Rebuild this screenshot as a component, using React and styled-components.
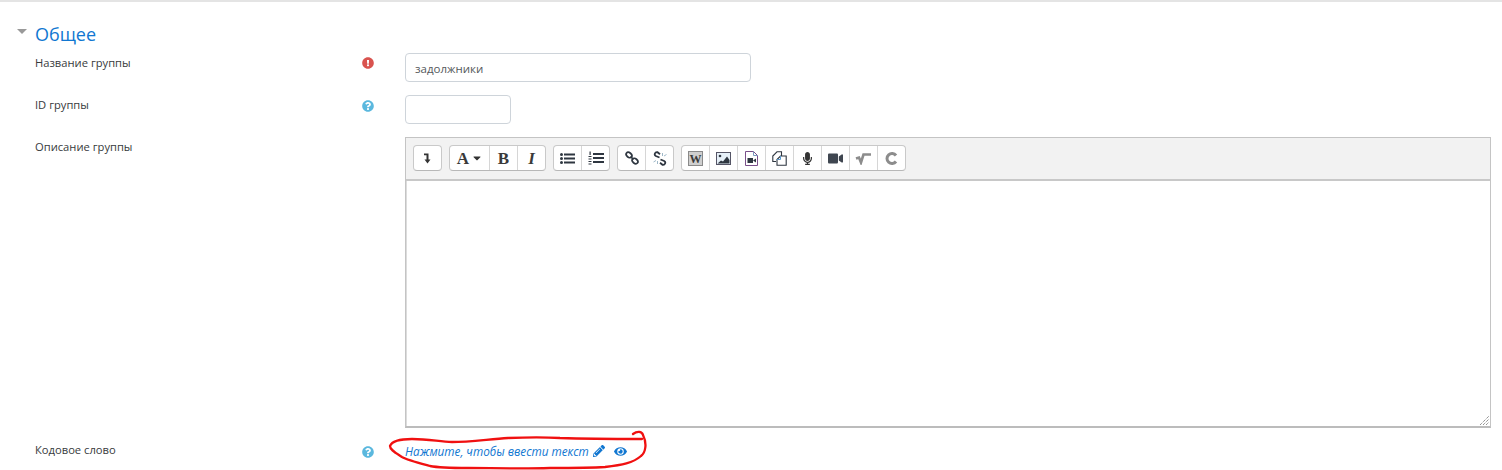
import React from 'react'
import styled, { createGlobalStyle } from 'styled-components'
import {
  FaCaretDown,
  FaExclamationCircle,
  FaEye,
  FaMicrophone,
  FaPencilAlt,
  FaQuestionCircle,
  FaVideo,
} from 'react-icons/fa'

const GlobalStyle = createGlobalStyle`
  html, body {
    margin: 0;
    padding: 0;
    background: #fff;
    overflow: hidden;
  }
  body {
    font-family: "Open Sans", "Liberation Sans", sans-serif;
    font-size: 11.2px;
    color: #373a3c;
  }
`

const Page = styled.div`
  position: relative;
  width: 1502px;
  height: 470px;
  box-sizing: border-box;
  border-top: 2px solid #e4e4e4;
  overflow: hidden;
`

const Legend = styled.div`
  display: flex;
  align-items: center;
  height: 24px;
  margin: 20px 0 0 17px;
  gap: 8px;
  font-size: 18px;
  color: #1177d1;
`

const Caret = styled.svg`
  width: 10px;
  height: 5px;
  margin-top: -6px;
`

const Row = styled.div`
  display: grid;
  grid-template-columns: 325px 45px 1fr;
  padding-left: 35px;
  margin-top: ${p => p.$top}px;
`

const Label = styled.div`
  font-size: 11.2px;
  line-height: 18px;
  padding-top: ${p => p.$pad || 0}px;
`

const Status = styled.div`
  display: flex;
  padding: ${p => p.$pad || 0}px 0 0 2px;
  font-size: 12px;
  color: ${p => (p.$error ? '#d9534f' : '#5bb8de')};
`

const Input = styled.div`
  box-sizing: border-box;
  width: ${p => p.$width}px;
  height: 29px;
  padding: 0 9px;
  border: 1px solid #ced4da;
  border-radius: 4px;
  font-size: 11.5px;
  line-height: 30px;
  color: #55595c;
`

const Editor = styled.div`
  box-sizing: border-box;
  width: 1086px;
  height: 291px;
  border: 1px solid #c4c4c4;
  border-bottom: 2px solid #bcbcbc;
  background: #fff;
  display: flex;
  flex-direction: column;
`

const Toolbar = styled.div`
  display: flex;
  gap: 7px;
  height: 43px;
  box-sizing: border-box;
  padding: 7px 0 0 7px;
  background: #f2f2f2;
  border-bottom: 2px solid #c8c8c8;
`

const Group = styled.div`
  display: flex;
  height: 26px;
  box-sizing: border-box;
  background: #fff;
  border: 1px solid #c9c9c9;
  border-radius: 4px;
  border-bottom-color: #b8b8b8;
`

const Tool = styled.div`
  box-sizing: border-box;
  width: ${p => p.$width || 28}px;
  display: flex;
  align-items: center;
  justify-content: center;
  gap: 3px;
  font-size: 13px;
  color: ${p => (p.$muted ? '#8c8c8c' : '#333')};
  &:first-child {
    width: ${p => p.$width || 27}px;
  }
  & + & {
    border-left: 1px solid #d6d6d6;
  }
`

const SerifGlyph = styled.span`
  font-family: "Liberation Serif", serif;
  font-size: 17px;
  font-weight: bold;
  font-style: ${p => (p.$italic ? 'italic' : 'normal')};
  line-height: 1;
  color: #3a3a3a;
`

const SmallCaret = styled(FaCaretDown)`
  width: 10px;
  height: 12px;
  margin-top: -1px;
`

const VideoGlyph = styled(FaVideo)`
  width: 15px;
  height: 15px;
  color: #3f4650;
`

const TextArea = styled.div`
  position: relative;
  flex: 1;
  border-left: 1px solid #dcdcdc;
`

const Grip = styled.svg`
  position: absolute;
  right: 1px;
  bottom: 1px;
  width: 10px;
  height: 10px;
`

const InplaceLink = styled.div`
  display: flex;
  align-items: center;
  height: 18px;
  margin-top: 1px;
  font-size: 11.75px;
  font-style: italic;
  color: #1177d1;
`

const Pencil = styled(FaPencilAlt)`
  width: 12px;
  height: 12px;
  margin-left: 4px;
`

const Eye = styled(FaEye)`
  width: 13px;
  height: 13px;
  margin-left: 9px;
`

const Scribble = styled.svg`
  position: absolute;
  left: 0;
  top: -2px;
  width: 1502px;
  height: 470px;
  pointer-events: none;
`

function CollapseIcon() {
  return (
    <svg width="9" height="12" viewBox="0 0 9 12">
      <path d="M1 1.500H5.500V7.500H7.500L4.500 11.500 1.500 7.500H3.500V3.200H1z" fill="#333" />
    </svg>
  )
}

function BulletsIcon() {
  return (
    <svg width="15" height="11" viewBox="0 0 15 11">
      <g fill="#2e3640">
        <circle cx="1.500" cy="1.500" r="1.500" />
        <circle cx="1.500" cy="5.500" r="1.500" />
        <circle cx="1.500" cy="9.500" r="1.500" />
        <rect x="4" y="0.500" width="11" height="2" />
        <rect x="4" y="4.500" width="11" height="2" />
        <rect x="4" y="8.500" width="11" height="2" />
      </g>
    </svg>
  )
}

function NumbersIcon() {
  return (
    <svg width="16" height="14" viewBox="0 0 16 14">
      <g fill="#2e3640">
        <rect x="5" y="2" width="11" height="2" />
        <rect x="5" y="6" width="11" height="2" />
        <rect x="5" y="10" width="11" height="2" />
        <rect x="1.500" y="0.500" width="1.200" height="3.500" />
        <rect x="0.500" y="5" width="3" height="1" />
        <rect x="0.500" y="7.500" width="3" height="1" />
        <rect x="0.500" y="10" width="3" height="1" />
        <rect x="0.500" y="12.500" width="3" height="1" />
      </g>
    </svg>
  )
}

function LinkIcon() {
  return (
    <svg width="14" height="14" viewBox="0 0 14 14">
      <g fill="none" stroke="#2e3640" strokeWidth="1.700">
        <ellipse cx="4" cy="4" rx="3.200" ry="2.300" transform="rotate(40 4 4)" />
        <ellipse cx="10" cy="10" rx="3.200" ry="2.300" transform="rotate(40 10 10)" />
        <path d="M5.500 5.500L8.500 8.500" />
      </g>
    </svg>
  )
}

function UnlinkIcon() {
  return (
    <svg width="14" height="15" viewBox="0 0 14 15">
      <g fill="none" stroke="#2e3640" strokeWidth="1.800">
        <path d="M6.500 6.500L2.800 5C.8 3.800 1.800.8 4.500 1.200L7 3.200" />
        <path d="M7.500 8.500L11.200 10C13.200 11.200 12.200 14.200 9.500 13.800L7 11.800" />
      </g>
      <path d="M9.500 2v3M11 5l2.500-1.500M.5 11L3 9.500M4.500 10v3" stroke="#9fb8c8" strokeWidth="1" />
    </svg>
  )
}

function WordIcon() {
  return (
    <svg width="15" height="15" viewBox="0 0 15 15">
      <rect x="0.500" y="0.500" width="14" height="14" fill="#cfcfcf" stroke="#8a8a8a" />
      <text x="7.500" y="12" textAnchor="middle" fontSize="12" fontWeight="bold" fontFamily="Liberation Serif, serif" fill="#3a3a3a">W</text>
    </svg>
  )
}

function ImageIcon() {
  return (
    <svg width="15" height="13" viewBox="0 0 15 13">
      <rect x="0.500" y="0.500" width="14" height="12" fill="#e6f0f8" stroke="#556" />
      <path d="M1.500 11.500l3.500-3 2 1 4-5 2.500 3.500v3.500z" fill="#2e3640" />
      <circle cx="4" cy="4" r="1.300" fill="#2e3640" />
    </svg>
  )
}

function MediaIcon() {
  return (
    <svg width="13" height="15" viewBox="0 0 13 15">
      <path d="M.5.500h8l4 4v10H.5z" fill="#fff" stroke="#7a4f8a" />
      <path d="M8.500.5v4h4" fill="none" stroke="#7a9ac0" />
      <rect x="2.500" y="7" width="5.500" height="5" fill="#2e3640" />
      <path d="M8 9.500l3-2v4z" fill="#2e3640" />
    </svg>
  )
}

function ManageFilesIcon() {
  return (
    <svg width="15" height="15" viewBox="0 0 15 15">
      <path d="M4 10.500H.8V5L5 .8h4.500V5" fill="#fff" stroke="#2e3640" strokeWidth="1.100" />
      <path d="M5 14.300V8.500L8.500 5h5.700v9.300z" fill="#fff" stroke="#2e3640" strokeWidth="1.100" />
      <path d="M5 8.500h3.500V5" fill="none" stroke="#5a9ad0" />
    </svg>
  )
}

function EquationIcon() {
  return (
    <svg width="17" height="13" viewBox="0 0 17 13">
      <path d="M1 6.500l3-1 2 5L8.500 2.500H16" fill="none" stroke="#8c8c8c" strokeWidth="2.600" />
    </svg>
  )
}

function RedoIcon() {
  return (
    <svg width="13" height="15" viewBox="0 0 13 15">
      <path d="M11 4.500A5 5 0 1 0 11 10.500" fill="none" stroke="#8c8c8c" strokeWidth="3" />
    </svg>
  )
}

export default function App() {
  return (
    <Page>
      <GlobalStyle />
      <Legend>
        <Caret viewBox="0 0 10 5">
          <path d="M0 0H10L5 5z" fill="#999" />
        </Caret>
        Общее
      </Legend>

      <Row $top={7}>
        <Label $pad={1}>Название группы</Label>
        <Status $pad={4} $error>
          <FaExclamationCircle />
        </Status>
        <Input $width={346}>задолжники</Input>
      </Row>

      <Row $top={13}>
        <Label $pad={1}>ID группы</Label>
        <Status $pad={5}>
          <FaQuestionCircle />
        </Status>
        <Input $width={106} />
      </Row>

      <Row $top={13}>
        <Label $pad={1}>Описание группы</Label>
        <div />
        <Editor>
          <Toolbar>
            <Group>
              <Tool><CollapseIcon /></Tool>
            </Group>
            <Group>
              <Tool $width={39}><SerifGlyph>A</SerifGlyph><SmallCaret /></Tool>
              <Tool><SerifGlyph>B</SerifGlyph></Tool>
              <Tool><SerifGlyph $italic>I</SerifGlyph></Tool>
            </Group>
            <Group>
              <Tool><BulletsIcon /></Tool>
              <Tool><NumbersIcon /></Tool>
            </Group>
            <Group>
              <Tool><LinkIcon /></Tool>
              <Tool><UnlinkIcon /></Tool>
            </Group>
            <Group>
              <Tool><WordIcon /></Tool>
              <Tool><ImageIcon /></Tool>
              <Tool><MediaIcon /></Tool>
              <Tool><ManageFilesIcon /></Tool>
              <Tool><FaMicrophone /></Tool>
              <Tool><VideoGlyph /></Tool>
              <Tool $muted><EquationIcon /></Tool>
              <Tool $muted><RedoIcon /></Tool>
            </Group>
          </Toolbar>
          <TextArea>
            <Grip viewBox="0 0 10 10">
              <path d="M1 10L10 1M4 10L10 4M7 10L10 7" stroke="#666" strokeDasharray="1 1" />
            </Grip>
          </TextArea>
        </Editor>
      </Row>

      <Row $top={13}>
        <Label>Кодовое слово</Label>
        <Status $pad={5}>
          <FaQuestionCircle />
        </Status>
        <InplaceLink>
          Нажмите, чтобы ввести текст
          <Pencil />
          <Eye />
        </InplaceLink>
      </Row>

      <Scribble viewBox="0 0 1502 470">
        <path
          d="M633 434 C637 431 642 431 643 435 C647 443 646 452 641 456 C633 463 622 465 605 467 C590 468 575 468 550 468 C520 469 490 468 468 468 C450 468 440 468 430 466 C415 462 407 460 402 457 C396 453 390 450 390 446 C392 441 402 439 412 439 C430 439 440 442 452 442 C470 442 490 439 508 438 C530 437 545 437 560 438 C590 439 615 439 642 439"
          fill="none"
          stroke="#f01010"
          strokeWidth="2.300"
          strokeLinecap="round"
        />
      </Scribble>
    </Page>
  )
}
